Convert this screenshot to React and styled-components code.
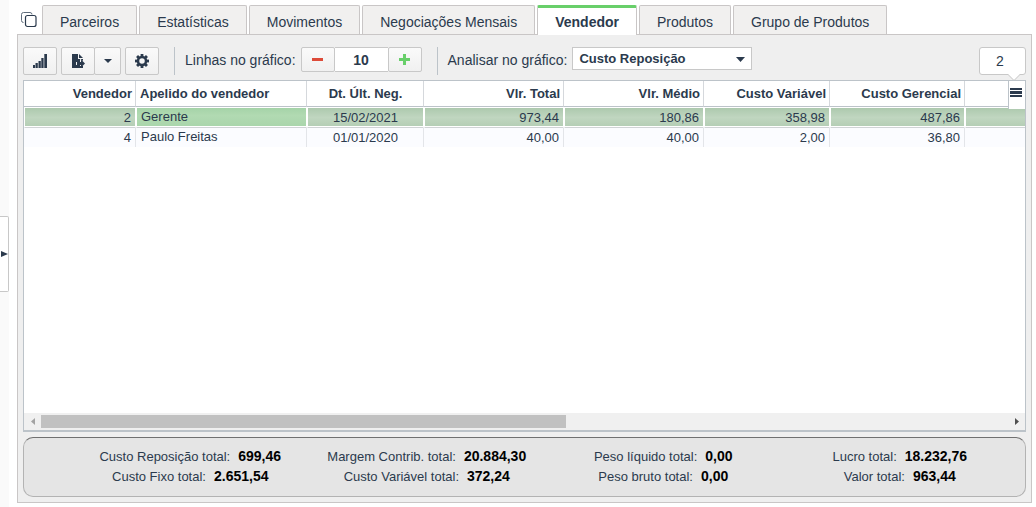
import { useState } from 'react'
import styled, { createGlobalStyle } from 'styled-components'

//data
const tabs = [
	'Parceiros',
	'Estatísticas',
	'Movimentos',
	'Negociações Mensais',
	'Vendedor',
	'Produtos',
	'Grupo de Produtos',
]

const columns = [
	{ title: 'Vendedor', width: 112, align: 'right' },
	{ title: 'Apelido do vendedor', width: 171, align: 'left' },
	{ title: 'Dt. Últ. Neg.', width: 117, align: 'center' },
	{ title: 'Vlr. Total', width: 140, align: 'right' },
	{ title: 'Vlr. Médio', width: 140, align: 'right' },
	{ title: 'Custo Variável', width: 126, align: 'right' },
	{ title: 'Custo Gerencial', width: 135, align: 'right' },
	{ title: '', align: 'right' },
]

const rows = [
	['2', 'Gerente', '15/02/2021', '973,44', '180,86', '358,98', '487,86', ''],
	['4', 'Paulo Freitas', '01/01/2020', '40,00', '40,00', '2,00', '36,80', ''],
]

const totals = [
	[
		['Custo Reposição total:', '699,46'],
		['Custo Fixo total:', '2.651,54'],
	],
	[
		['Margem Contrib. total:', '20.884,30'],
		['Custo Variável total:', '372,24'],
	],
	[
		['Peso líquido total:', '0,00'],
		['Peso bruto total:', '0,00'],
	],
	[
		['Lucro total:', '18.232,76'],
		['Valor total:', '963,44'],
	],
]

//css
const GlobalStyle = createGlobalStyle`
	* {
		box-sizing: border-box;
	}
	body {
		margin: 0;
		background: #fff;
		color: #2b3a4d;
		font-family: 'Liberation Sans', Arial, sans-serif;
		font-size: 14px;
	}
	button, input, select {
		font-family: inherit;
		color: inherit;
		margin: 0;
	}
	svg {
		display: block;
	}
`

const Root = styled.div`
	display: flex;
	min-height: 100vh;
`

const Rail = styled.aside`
	display: flex;
	align-items: center;
	width: 9px;
	background: #fafafa;
`

const RailButton = styled.button`
	display: flex;
	align-items: center;
	justify-content: flex-end;
	width: 9px;
	height: 76px;
	padding: 0;
	background: #fff;
	border: 1px solid #c8c8c8;
	border-left: 0;
	border-radius: 0 2px 2px 0;
`

const Main = styled.main`
	flex: 1;
	min-width: 0;
	display: flex;
	flex-direction: column;
	padding: 5px 4px 4px 8px;
`

const TabBar = styled.nav`
	display: flex;
	align-items: flex-start;
	gap: 2px;
	padding-left: 4px;
`

const CopyButton = styled.button`
	width: 19px;
	height: 29px;
	padding: 0;
	background: none;
	border: 0;
`

const Tab = styled.button`
	position: relative;
	height: ${props => (props.$active ? 30 : 29)}px;
	margin-bottom: ${props => (props.$active ? -1 : 0)}px;
	padding: 4px 17px 0;
	font-size: 14px;
	font-weight: ${props => (props.$active ? 'bold' : 'normal')};
	white-space: nowrap;
	background: ${props => (props.$active ? '#fff' : '#f1f0ef')};
	border: 1px solid #c9c6c6;
	border-bottom: 0;
	border-radius: 2px 2px 0 0;
	${props => props.$active && 'border-top: 3px solid #68cf6a; padding-top: 0;'}
`

const Panel = styled.section`
	flex: 1;
	display: flex;
	flex-direction: column;
	gap: 5px;
	padding: 12px 5px 5px;
	background: #efefef;
	border: 1px solid #c9c6c6;
`

const Toolbar = styled.div`
	display: flex;
	align-items: flex-start;
	height: 28px;
`

const ButtonGroup = styled.div`
	display: flex;
	margin-right: 4px;
`

const ToolButton = styled.button`
	display: flex;
	align-items: center;
	justify-content: center;
	width: ${props => props.$width || 34}px;
	height: ${props => props.$height || 28}px;
	padding: 0;
	background: linear-gradient(#fafafa, #f0f0f0);
	border: 1px solid #c8c8c8;
	border-radius: 2px;
	& + & {
		margin-left: -1px;
	}
`

const Separator = styled.div`
	width: 1px;
	height: 28px;
	margin: 0 10px 0 ${props => props.$before}px;
	background: #bcc3c9;
`

const FieldLabel = styled.label`
	margin-right: 5px;
	line-height: 26px;
	white-space: nowrap;
`

const CountInput = styled.input`
	width: 53px;
	height: 25px;
	padding: 0;
	font-size: 14px;
	font-weight: bold;
	text-align: center;
	background: #fff;
	border: 1px solid #c8c8c8;
	border-width: 1px 0;
`

const SelectBox = styled.div`
	position: relative;
	width: 180px;
	height: 23px;
`

const Select = styled.select`
	appearance: none;
	width: 100%;
	height: 23px;
	padding: 0 24px 0 6px;
	font-size: 13px;
	font-weight: bold;
	background: #fff;
	border: 1px solid #c8c8c8;
	border-radius: 0;
`

const SelectArrow = styled.svg`
	position: absolute;
	top: 10px;
	right: 7px;
	pointer-events: none;
`

const Bubble = styled.div`
	position: relative;
	width: 47px;
	height: 28px;
	margin-left: auto;
	padding-right: 5px;
	line-height: 27px;
	text-align: center;
	background: #fff;
	border: 1px solid #c8c8c8;
	border-radius: 3px;
`

const BubbleTip = styled.svg`
	position: absolute;
	right: 4px;
	top: 26px;
`

const Grid = styled.div`
	position: relative;
	flex: 1;
	display: flex;
	flex-direction: column;
	justify-content: space-between;
	overflow: hidden;
	background: #fff;
	border: 1px solid #bcc3c9;
	border-bottom-width: 2px;
`

const Table = styled.table`
	width: 100%;
	table-layout: fixed;
	border-collapse: separate;
	border-spacing: 0;
	font-size: 13px;
`

const HeadCell = styled.th`
	height: 26px;
	padding: 0 3px 0 4px;
	text-align: ${props => props.$align};
	white-space: nowrap;
	border-right: 1px solid #d5d8dc;
	border-bottom: 1px solid #bcc3c9;
	&:last-child {
		border-right: 0;
	}
`

const Cell = styled.td`
	height: ${props => (props.$selected ? 21 : 19)}px;
	padding: 0 4px ${props => (props.$align === 'left' ? 2 : 0)}px ${props => (props.$selected ? 4 : 5)}px;
	line-height: 16px;
	text-align: ${props => props.$align};
	background: #fbfcff;
	border-right: 1px solid #e3e5e9;
	${props =>
		props.$selected &&
		`
		background: ${props.$focus ? 'linear-gradient(#a5d3a8, #b1dab2 40%, #a9d5ab)' : 'linear-gradient(#adc9ae, #c0d6c0 50%, #b3cdb4)'};
		border: 1px solid #fff;
		border-bottom: 1px solid #d0d3d6;
		box-shadow: inset 0 -1px 0 #fff;
	`}
	&:last-child {
		border-right: 0;
	}
`

const MenuButton = styled.button`
	position: absolute;
	top: 0;
	right: 0;
	display: flex;
	justify-content: flex-start;
	width: 17px;
	height: 28px;
	padding: 7px 0 0 1px;
	background: #fff;
	border: 0;
	border-left: 1px solid #bcc3c9;
`

const ScrollBar = styled.div`
	display: flex;
	height: 17px;
	padding: 2px 0;
	background: #f0f0f0;
`

const ScrollButton = styled.button`
	display: flex;
	align-items: center;
	justify-content: center;
	width: 17px;
	padding: 0;
	background: none;
	border: 0;
`

const ScrollTrack = styled.div`
	flex: 1;
`

const ScrollThumb = styled.div`
	width: 54.3%;
	height: 13px;
	background: #c1c1c1;
`

const Summary = styled.footer`
	display: grid;
	grid-template-columns: repeat(4, 1fr);
	height: 60px;
	padding: 8px 7px 0 48px;
	background: #e5e5e5;
	border: 1px solid #b3b3b3;
	border-top-color: #707070;
	border-radius: 10px;
`

const SummaryItem = styled.p`
	display: flex;
	align-items: baseline;
	justify-content: center;
	gap: 8px;
	height: 20px;
	margin: 0;
	font-size: 13px;
	line-height: 20px;
	white-space: nowrap;
	strong {
		font-size: 14px;
		color: #000;
	}
`

const CopyIcon = () => (
	<svg width='19' height='19' viewBox='0 0 19 19' fill='none' stroke='#2b3a4d'>
		<path
			d='M2.500 12.500a2 2 0 0 1-2-2v-6a2 2 0 0 1 2-2h6.500a2 2 0 0 1 2 2'
			stroke='#5f6c7b'
		/>
		<rect x='4.5' y='5.5' width='10.500' height='11' rx='2' strokeWidth='1.2' />
	</svg>
)

const SignalIcon = () => (
	<svg width='16' height='14' viewBox='0 0 16 14' fill='#2b3a4d'>
		<path d='M1 11h2v3H1zM3.500 9h2.300v5H3.500zM6.500 7h2.300v7H6.500zM9.300 4h2.300v10H9.300zM12.300 0h2.700v14h-2.700z' />
	</svg>
)

const ExportIcon = () => (
	<svg width='14' height='14' viewBox='0 0 14 14' fill='#2b3a4d'>
		<path d='M1 0h6v5h5v2L9 4.800V8H5v3h4v1h3v2H1z' />
		<path d='M8 0l4 4H8zM10 5.500l4 4-4 4V11H6V8h4z' />
	</svg>
)

const teeth = [0, 45, 90, 135, 180, 225, 270, 315]

const GearIcon = () => (
	<svg width='14' height='14' viewBox='0 0 14 14' fill='#2b3a4d'>
		<circle cx='7' cy='7' r='4' fill='none' stroke='#2b3a4d' strokeWidth='2.500' />
		{teeth.map(angle => (
			<rect
				key={angle}
				x='5.600'
				y='0'
				width='2.800'
				height='3'
				transform={`rotate(${angle} 7 7)`}
			/>
		))}
	</svg>
)

const CaretIcon = () => (
	<svg width='8' height='4' viewBox='0 0 8 4' fill='#2b3a4d'>
		<path d='M0 0h8L4 4z' />
	</svg>
)

const App = () => {
	const [active, setActive] = useState('Vendedor')
	const [lines, setLines] = useState(10)

	return (
		<Root>
			<GlobalStyle />
			<Rail>
				<RailButton aria-label='Expandir'>
					<svg width='7' height='6' viewBox='0 0 7 6' fill='#2b3a4d'>
						<path d='M0 0l7 3-7 3z' />
					</svg>
				</RailButton>
			</Rail>
			<Main>
				{/* tabs */}
				<TabBar>
					<CopyButton aria-label='Copiar'>
						<CopyIcon />
					</CopyButton>
					{tabs.map(tab => (
						<Tab key={tab} $active={tab === active} onClick={() => setActive(tab)}>
							{tab}
						</Tab>
					))}
				</TabBar>

				<Panel>
					{/* toolbar */}
					<Toolbar>
						<ButtonGroup>
							<ToolButton aria-label='Gráfico'>
								<SignalIcon />
							</ToolButton>
						</ButtonGroup>
						<ButtonGroup>
							<ToolButton aria-label='Exportar'>
								<ExportIcon />
							</ToolButton>
							<ToolButton $width={27} aria-label='Mais opções'>
								<CaretIcon />
							</ToolButton>
						</ButtonGroup>
						<ButtonGroup>
							<ToolButton aria-label='Configurar'>
								<GearIcon />
							</ToolButton>
						</ButtonGroup>
						<Separator $before={11} />
						<FieldLabel htmlFor='lines'>Linhas no gráfico:</FieldLabel>
						<ToolButton $height={25} aria-label='Menos' onClick={() => setLines(lines - 1)}>
							<svg width='11' height='3' viewBox='0 0 11 3' fill='#dd4b39'>
								<path d='M0 0h11v3H0z' />
							</svg>
						</ToolButton>
						<CountInput
							id='lines'
							value={lines}
							onChange={e => setLines(Number(e.target.value) || 0)}
						/>
						<ToolButton $height={25} aria-label='Mais' onClick={() => setLines(lines + 1)}>
							<svg width='11' height='11' viewBox='0 0 11 11' fill='#68cf6a'>
								<path d='M4 0h3v4h4v3H7v4H4V7H0V4h4z' />
							</svg>
						</ToolButton>
						<Separator $before={15} />
						<FieldLabel htmlFor='analysis'>Analisar no gráfico:</FieldLabel>
						<SelectBox>
							<Select id='analysis'>
								<option>Custo Reposição</option>
							</Select>
							<SelectArrow width='9' height='5' viewBox='0 0 9 5' fill='#2b3a4d'>
								<path d='M0 0h9L4.500 5z' />
							</SelectArrow>
						</SelectBox>
						<Bubble>
							2
							<BubbleTip width='14' height='7' viewBox='0 0 14 7' fill='#fff'>
								<path d='M1 0l6 6 6-6z' />
								<path d='M1 .5l6 6 6-6' fill='none' stroke='#c8c8c8' />
							</BubbleTip>
						</Bubble>
					</Toolbar>

					{/* grid */}
					<Grid>
						<Table>
							<colgroup>
								{columns.map((col, i) => (
									<col key={i} width={col.width} />
								))}
							</colgroup>
							<thead>
								<tr>
									{columns.map((col, i) => (
										<HeadCell key={i} $align={col.align}>
											{col.title}
										</HeadCell>
									))}
								</tr>
							</thead>
							<tbody>
								{rows.map((row, r) => (
									<tr key={row[0]}>
										{row.map((value, i) => (
											<Cell
												key={i}
												$align={columns[i].align}
												$selected={r === 0}
												$focus={i === 1}
											>
												{value}
											</Cell>
										))}
									</tr>
								))}
							</tbody>
						</Table>
						<MenuButton aria-label='Colunas'>
							<svg width='12' height='9' viewBox='0 0 12 9' fill='#2b3a4d'>
								<path d='M0 0h12v2H0zM0 3h12v3H0zM0 7h12v2H0z' />
							</svg>
						</MenuButton>
						<ScrollBar>
							<ScrollButton aria-label='Rolar para a esquerda'>
								<svg width='4' height='7' viewBox='0 0 4 7' fill='#a3a3a3'>
									<path d='M4 0v7L0 3.500z' />
								</svg>
							</ScrollButton>
							<ScrollTrack>
								<ScrollThumb />
							</ScrollTrack>
							<ScrollButton aria-label='Rolar para a direita'>
								<svg width='4' height='7' viewBox='0 0 4 7' fill='#505050'>
									<path d='M0 0v7l4-3.500z' />
								</svg>
							</ScrollButton>
						</ScrollBar>
					</Grid>

					{/* totals */}
					<Summary>
						{totals.map((group, i) => (
							<div key={i}>
								{group.map(([label, value]) => (
									<SummaryItem key={label}>
										{label}
										<strong>{value}</strong>
									</SummaryItem>
								))}
							</div>
						))}
					</Summary>
				</Panel>
			</Main>
		</Root>
	)
}

export default App
